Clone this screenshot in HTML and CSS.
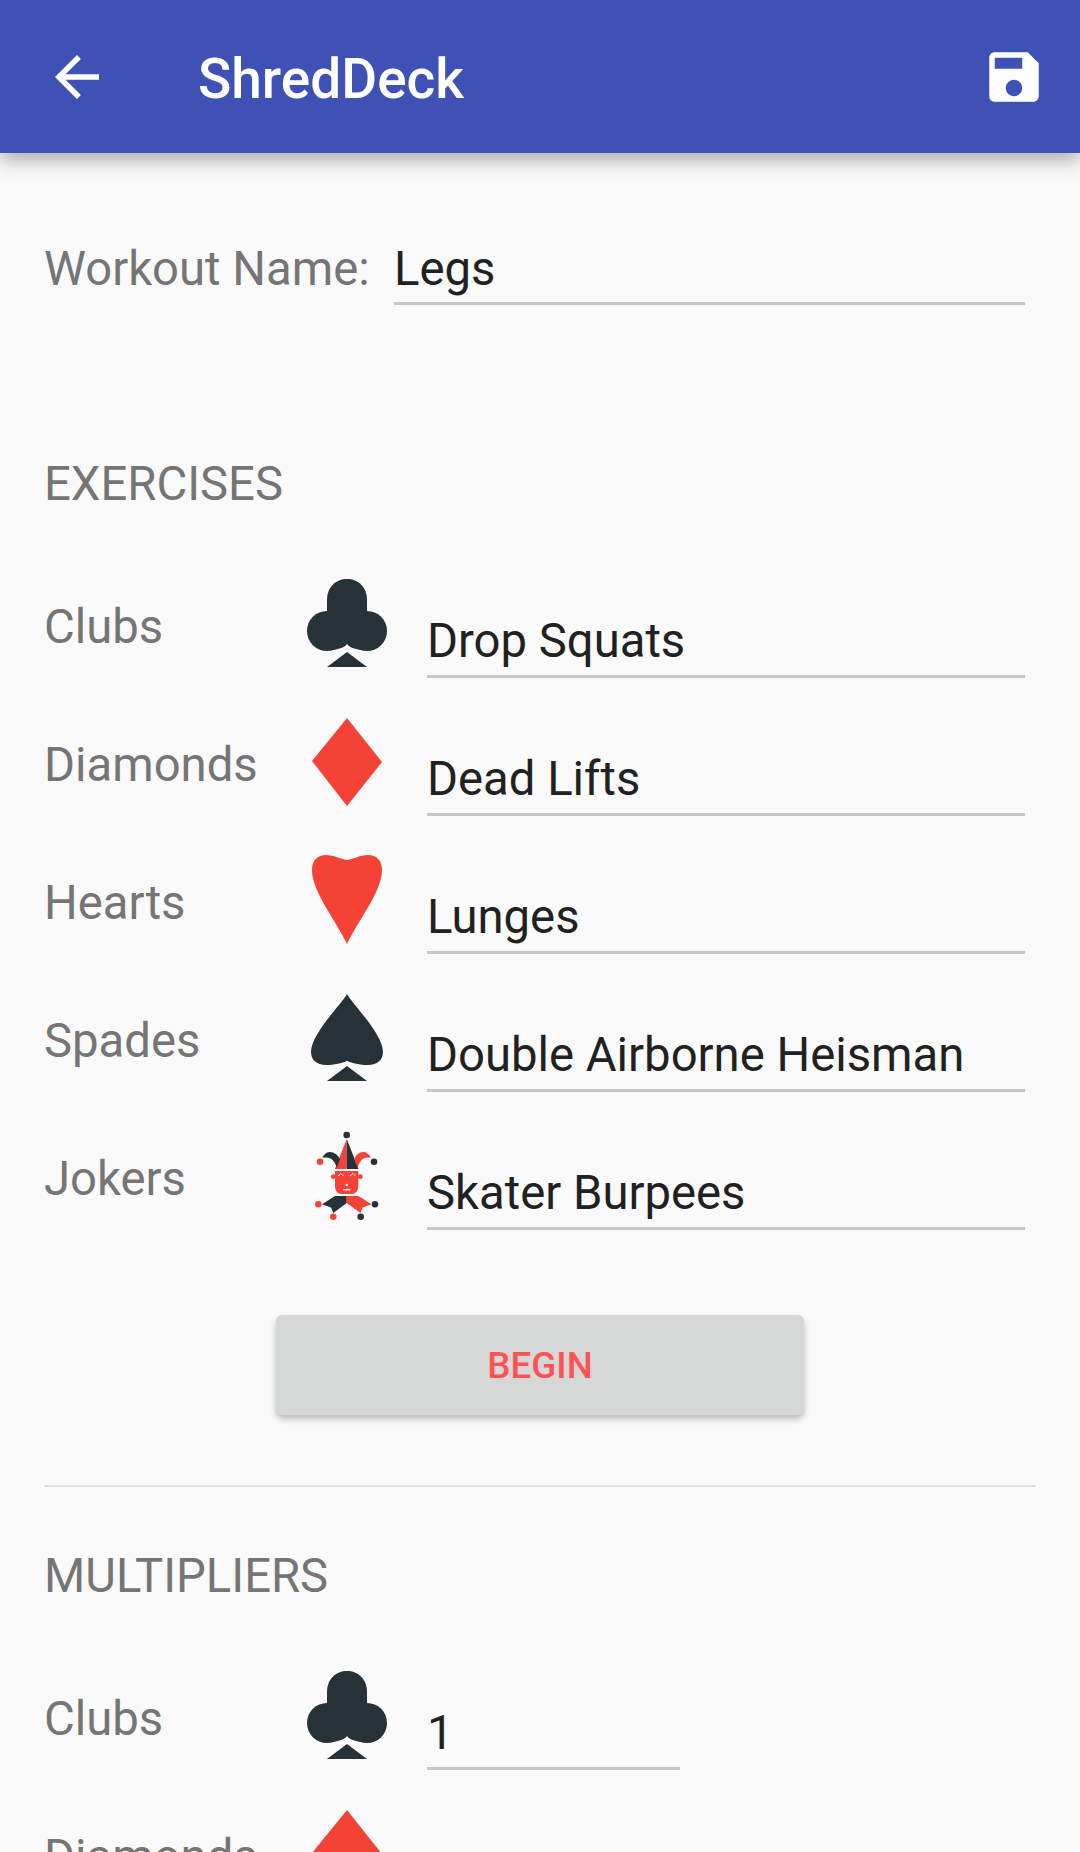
FILE: index.html
```html
<!DOCTYPE html>
<html lang="en">
<head>
  <meta charset="UTF-8">
  <title>ShredDeck</title>
  <link rel="stylesheet" href="styles.css">
</head>
<body>
  <svg class="sprites" width="0" height="0">
    <symbol id="club" viewBox="0 0 90 90">
      <path d="M25 34 V22 C25 9 34 1 45 1 C56 1 65 9 65 22 V34 Z" fill="#263238"/>
      <circle cx="25" cy="53" r="20" fill="#263238"/>
      <circle cx="65" cy="53" r="20" fill="#263238"/>
      <path d="M25 30 H65 V72 C55 72 48 70 45 66 C42 70 35 72 25 72 Z" fill="#263238"/>
      <path d="M45 74 L65 89 L25 89 Z" fill="#263238"/>
    </symbol>
    <symbol id="diamond" viewBox="0 0 90 90">
      <path d="M45 2 L80 46 L45 90 L10 45 Z" fill="#f44336"/>
    </symbol>
    <symbol id="heart" viewBox="0 0 90 90">
      <path d="M45 90 C35 68 10 38 10 16 C10 6 16 1 24 1 C32 1 38 5 45 6 C52 5 58 1 66 1 C74 1 80 6 80 16 C80 38 55 68 45 90 Z" fill="#f44336"/>
    </symbol>
    <symbol id="spade" viewBox="0 0 90 90">
      <path d="M45 2 C38 14 9 42 9 60 C9 68 15 73 24 73 C32 73 40 71 45 69 C50 71 58 73 66 73 C75 73 81 68 81 60 C81 42 52 14 45 2 Z" fill="#263238"/>
      <path d="M45 74 L65 89 L25 89 Z" fill="#263238"/>
    </symbol>
    <symbol id="joker" viewBox="0 0 90 90">
      <circle cx="44.7" cy="5" r="3.3" fill="#263238"/>
      <path d="M44.7 9 L33 39 H44.7 Z" fill="#f44336"/>
      <path d="M44.7 9 L56.5 39 H44.7 Z" fill="#263238"/>
      <path d="M20.3 27.7 C22 24 25 22 28 22 C32 22 36 25 38 29.3 L34.7 37.7 C33.5 34 32.5 32 31.3 31 C30 29 27 27 20.3 27.7 Z" fill="#263238"/>
      <path d="M69 27.7 C67 24 64 22 61.3 22 C57 22 54 25 52.3 29.3 L55.7 37.7 C56.5 34 58 32 59 31 C60 29 63 27 69 27.7 Z" fill="#f44336"/>
      <circle cx="18" cy="31.7" r="3.3" fill="#f44336"/>
      <circle cx="72" cy="31.7" r="3.3" fill="#263238"/>
      <path d="M33 41 H56.3 V56 C56.3 61 53 64 50 64 H39 C36 64 33 61 33 56 Z" fill="#f44336"/>
      <circle cx="31.3" cy="46.7" r="2.4" fill="#f44336"/>
      <circle cx="58.3" cy="46.7" r="2.4" fill="#f44336"/>
      <path d="M36 46 L39 43.5 L41.5 46 M48 46 L51 43.5 L53.5 46" stroke="#fff" stroke-width="1" fill="none"/>
      <circle cx="44.7" cy="55" r="1.3" fill="#fff"/>
      <rect x="41" y="59" width="7.4" height="1.4" fill="#fff"/>
      <path d="M44.7 66 H33 L20 74.3 L29 77.5 L31.3 83 L44.7 73 Z" fill="#263238"/>
      <path d="M44.7 66 H56.5 L69.5 74.3 L60.5 77.5 L58.5 83 L44.7 73 Z" fill="#f44336"/>
      <circle cx="16.3" cy="74.3" r="3.3" fill="#f44336"/>
      <circle cx="73" cy="74.3" r="3.3" fill="#263238"/>
      <circle cx="31.3" cy="86.7" r="3.3" fill="#f44336"/>
      <circle cx="58.7" cy="86.7" r="3.3" fill="#263238"/>
    </symbol>
  </svg>

  <header class="app-bar">
    <svg class="back-icon" viewBox="0 0 24 24"><path d="M20 11H7.83l5.59-5.59L12 4l-8 8 8 8 1.41-1.41L7.83 13H20v-2z" fill="#fff"/></svg>
    <h1 class="app-title">ShredDeck</h1>
    <svg class="save-icon" viewBox="0 0 24 24"><path d="M17 3H5c-1.11 0-2 .9-2 2v14c0 1.1.89 2 2 2h14c1.1 0 2-.9 2-2V7l-4-4zm-5 16c-1.66 0-3-1.34-3-3s1.34-3 3-3 3 1.34 3 3-1.34 3-3 3zm3-10H5V5h10v4z" fill="#fff"/></svg>
  </header>

  <main class="content">
    <div class="name-row">
      <span class="label">Workout Name:</span>
      <div class="field name-field">Legs</div>
    </div>

    <h2 class="section-title exercises-title">EXERCISES</h2>
    <div class="rows">
      <div class="row">
        <span class="label row-label">Clubs</span>
        <svg class="suit"><use href="#club"/></svg>
        <div class="field">Drop Squats</div>
      </div>
      <div class="row">
        <span class="label row-label">Diamonds</span>
        <svg class="suit"><use href="#diamond"/></svg>
        <div class="field">Dead Lifts</div>
      </div>
      <div class="row">
        <span class="label row-label">Hearts</span>
        <svg class="suit"><use href="#heart"/></svg>
        <div class="field">Lunges</div>
      </div>
      <div class="row">
        <span class="label row-label">Spades</span>
        <svg class="suit"><use href="#spade"/></svg>
        <div class="field">Double Airborne Heisman</div>
      </div>
      <div class="row">
        <span class="label row-label">Jokers</span>
        <svg class="suit"><use href="#joker"/></svg>
        <div class="field">Skater Burpees</div>
      </div>
    </div>

    <div class="begin-wrap">
      <button class="begin-btn">BEGIN</button>
    </div>
    <hr class="divider">

    <h2 class="section-title">MULTIPLIERS</h2>
    <div class="rows multipliers">
      <div class="row">
        <span class="label row-label">Clubs</span>
        <svg class="suit"><use href="#club"/></svg>
        <div class="field small">1</div>
      </div>
      <div class="row">
        <span class="label row-label">Diamonds</span>
        <svg class="suit"><use href="#diamond"/></svg>
      </div>
    </div>
  </main>
</body>
</html>
```

FILE: styles.css
```css
* { margin: 0; padding: 0; box-sizing: border-box; }

html, body {
  height: 1852px;
  overflow: hidden;
}

body {
  font-family: Roboto, sans-serif;
  background: #fafafa;
  color: #212121;
}

.sprites {
  display: block;
  height: 0;
}

/* App bar */
.app-bar {
  position: relative;
  display: flex;
  align-items: center;
  height: 153px;
  background: #3f51b5;
  box-shadow: 0 8px 18px rgba(0, 0, 0, 0.3);
}

.back-icon {
  width: 66px;
  height: 66px;
  margin-left: 44px;
}

.app-title {
  margin-left: 88px;
  padding-top: 4px;
  font-size: 55px;
  font-weight: 500;
  color: #fff;
}

.save-icon {
  width: 66px;
  height: 66px;
  margin-left: auto;
  margin-right: 33px;
}

/* Form */
.content {
  padding: 0 44px;
}

.label {
  font-size: 47.25px;
  color: #757575;
}

.field {
  flex: 1;
  height: 70px;
  padding-top: 8px;
  font-size: 47.25px;
  line-height: 52px;
  border-bottom: 3px solid #c6c6c6;
  margin-right: 11px;
}

.name-row {
  display: flex;
  align-items: flex-start;
  margin-top: 82px;
}

.name-row .label {
  width: 350px;
  flex: none;
  padding-top: 8px;
  line-height: 52px;
  white-space: nowrap;
}

.section-title {
  font-size: 47.25px;
  font-weight: 400;
  line-height: 52px;
  color: #757575;
}

.exercises-title {
  margin-top: 153px;
}

.rows {
  display: flex;
  flex-direction: column;
  gap: 38px;
  margin-top: 68px;
}

.row {
  display: flex;
  align-items: flex-end;
  height: 100px;
}

.row-label {
  width: 258px;
  flex: none;
  align-self: flex-start;
  line-height: 52px;
  padding-top: 23px;
}

.suit {
  width: 90px;
  height: 90px;
  flex: none;
  align-self: flex-start;
}

.row .field {
  margin-left: 35px;
  padding-top: 7px;
}

.row .field.small {
  flex: none;
  width: 253px;
}

/* Button */
.begin-wrap {
  display: flex;
  justify-content: center;
  margin-top: 85px;
}

.begin-btn {
  width: 528px;
  height: 100px;
  border: none;
  border-radius: 6px;
  background: #d6d7d7;
  color: #ff5252;
  font-family: Roboto, sans-serif;
  font-size: 36.75px;
  font-weight: 500;
  box-shadow: 0 4px 6px rgba(0, 0, 0, 0.25);
}

.divider {
  border: none;
  border-top: 2px solid #e0e0e0;
  margin-top: 70px;
}

.divider + .section-title {
  margin-top: 63px;
}
```
